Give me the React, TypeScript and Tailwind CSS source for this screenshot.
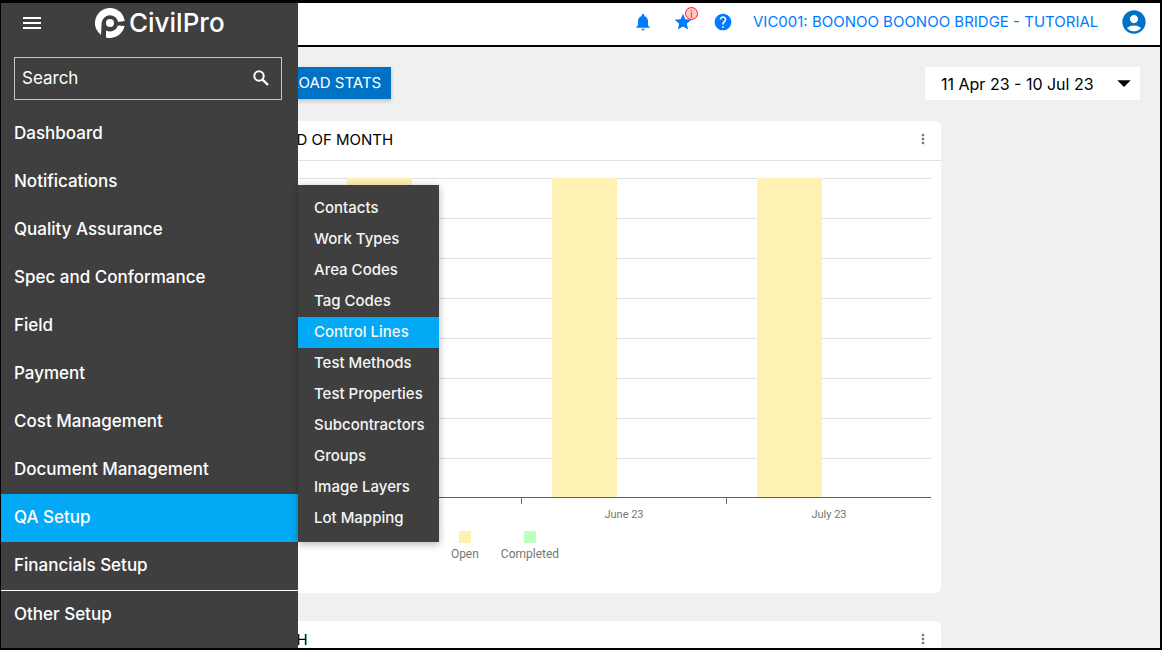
import { useState } from "react";
import { clsx } from "clsx";
import {
  MdAccountCircle,
  MdArrowDropDown,
  MdHelp,
  MdMenu,
  MdMoreVert,
  MdNotifications,
  MdStar,
} from "react-icons/md";

interface NavItem {
  label: string;
  divided?: boolean;
  children?: string[];
}

const NAV_ITEMS: NavItem[] = [
  { label: "Dashboard" },
  { label: "Notifications" },
  { label: "Quality Assurance" },
  { label: "Spec and Conformance" },
  { label: "Field" },
  { label: "Payment" },
  { label: "Cost Management" },
  { label: "Document Management" },
  {
    label: "QA Setup",
    children: [
      "Contacts",
      "Work Types",
      "Area Codes",
      "Tag Codes",
      "Control Lines",
      "Test Methods",
      "Test Properties",
      "Subcontractors",
      "Groups",
      "Image Layers",
      "Lot Mapping",
    ],
  },
  { label: "Financials Setup" },
  { label: "Other Setup", divided: true },
];

const MONTHS = [
  { label: "April 23", open: 0 },
  { label: "May 23", open: 8 },
  { label: "June 23", open: 8 },
  { label: "July 23", open: 8 },
];

const LEGEND = [
  { label: "Open", swatch: "bg-[#fff1b3]" },
  { label: "Completed", swatch: "bg-[#bfffbf]" },
];

function Logo() {
  return (
    <a href="#" aria-label="CivilPro" className="flex items-center gap-1 text-white">
      <svg viewBox="0 0 30 30" className="size-[30px]" fill="currentColor">
        <path d="M6 27 A15 15 0 1 1 29.8 13 L23.2 14 A8.4 8.4 0 0 0 6.6 15 Z" />
        <path d="M11 29.4 V22.4 A8.4 8.4 0 0 0 23 17.4 L29.6 18 A15 15 0 0 1 11 29.4 Z" />
        <circle cx="15" cy="15" r="4" />
      </svg>
      <span className="text-[26px] font-medium leading-7">CivilPro</span>
    </a>
  );
}

function SearchIcon() {
  return (
    <svg viewBox="0 0 20 20" className="size-5" fill="none" stroke="currentColor" strokeWidth="2">
      <circle cx="8" cy="7" r="4.7" />
      <path d="M11.3 10.3 L17 16" strokeWidth="2.4" />
    </svg>
  );
}

function Submenu({ items }: { items: string[] }) {
  const [active, setActive] = useState("Control Lines");

  return (
    <ul className="absolute bottom-0 left-full w-[141px] bg-[#3f3f3f] py-2 shadow-[0_2px_8px_rgba(0,0,0,0.3)]">
      {items.map((item) => (
        <li key={item}>
          <a
            href="#"
            onClick={() => setActive(item)}
            className={clsx(
              "flex h-[31px] items-center whitespace-nowrap pl-4 text-[15px] font-medium text-[#f5f5f5]",
              item === active && "bg-[#03a9f4]"
            )}
          >
            {item}
          </a>
        </li>
      ))}
    </ul>
  );
}

function Sidebar() {
  const [open, setOpen] = useState("QA Setup");

  return (
    <aside className="absolute inset-y-0 left-0 z-10 w-[297px] bg-[#3f3f3f] text-white">
      <div className="flex h-10 items-center pl-[19px]">
        <button aria-label="Menu" className="mr-[51px]">
          <MdMenu className="size-6" />
        </button>
        <Logo />
      </div>

      <div className="mb-[10px] ml-[13px] mr-4 mt-[14px] flex h-[43px] items-center border border-[#c8c8c8] pl-[7px] pr-[10px]">
        <input
          type="text"
          aria-label="Search"
          placeholder="Search"
          className="min-w-0 flex-1 bg-transparent text-[17px] outline-none placeholder:text-white"
        />
        <button aria-label="Run search">
          <SearchIcon />
        </button>
      </div>

      <nav>
        <ul>
          {NAV_ITEMS.map((item) => (
            <li key={item.label} className={clsx("relative", item.divided && "border-t border-white")}>
              <a
                href="#"
                onClick={() => setOpen(item.label)}
                className={clsx(
                  "flex h-12 items-center pl-[13px] text-[17px] font-medium",
                  open === item.label && "bg-[#03a9f4]"
                )}
              >
                {item.label}
              </a>
              {item.children && open === item.label && <Submenu items={item.children} />}
            </li>
          ))}
        </ul>
      </nav>
    </aside>
  );
}

function Header() {
  return (
    <header className="flex h-11 items-center justify-end gap-5 border-b-2 border-black bg-white pb-1 pr-3 text-[#007bff]">
      <button aria-label="Notifications">
        <MdNotifications className="size-5" />
      </button>
      <button aria-label="Favourites" className="relative">
        <MdStar className="size-5" />
        <span className="absolute -top-[5px] left-3 flex size-[13px] items-center justify-center rounded-full border border-[#f02020] bg-[#ffc9c9] text-[10px] leading-none text-[#f02020]">
          i
        </span>
      </button>
      <button aria-label="Help">
        <MdHelp className="size-5" />
      </button>
      <a href="#" className="w-[347px] whitespace-nowrap text-[15px]">
        VIC001: BOONOO BOONOO BRIDGE - TUTORIAL
      </a>
      <button aria-label="Account" className="text-[#0072c6]">
        <MdAccountCircle className="size-7" />
      </button>
    </header>
  );
}

function CardHeader({ title }: { title: string }) {
  return (
    <div className="flex h-10 items-center justify-between border-b border-[#e0e0e0] pl-[69px] pr-[10px]">
      <h2 className="text-[15px]">{title}</h2>
      <button aria-label="More options" className="pb-1 text-[#767676]">
        <MdMoreVert className="size-4" />
      </button>
    </div>
  );
}

function MonthChart() {
  const left = 42;
  const step = 205;

  return (
    <svg viewBox="0 0 872 350" className="block w-full font-['Roboto'] text-[11px]">
      {[0, 1, 2, 3, 4, 5, 6, 7].map((n) => (
        <rect key={n} x={left} y={n * 40} width="820" height="1" fill="#e0e0e0" />
      ))}
      {MONTHS.map((month, i) => (
        <g key={month.label}>
          <rect
            x={left + i * step + 31}
            y={320 - month.open * 40}
            width="65"
            height={month.open * 40}
            fill="#fff1b3"
          />
          <rect x={left + i * step} y="320" width="1" height="6" fill="#6e6e6e" />
          <text x={left + i * step + 103} y="340" textAnchor="middle" fill="#767676">
            {month.label}
          </text>
        </g>
      ))}
      <rect x={left} y="319" width="820" height="1" fill="#5f5f5f" />
    </svg>
  );
}

function Dashboard() {
  return (
    <main className="ml-[68px] pr-5 pt-5">
      <div className="flex h-[54px] items-start justify-between">
        <button className="ml-[163px] h-8 bg-[#0072c6] px-[10px] text-[15px] text-white shadow-[0_2px_4px_rgba(0,0,0,0.2)]">
          DOWNLOAD STATS
        </button>
        <div className="relative">
          <select
            aria-label="Date range"
            className="h-[33px] w-[215px] appearance-none bg-white pl-4 text-base text-black"
          >
            <option>11 Apr 23 - 10 Jul 23</option>
          </select>
          <MdArrowDropDown className="pointer-events-none absolute right-0 top-0 size-8" />
        </div>
      </div>

      <div className="flex max-w-[872px] flex-col gap-7">
        <section className="rounded-md bg-white pb-[31px]">
          <CardHeader title="LOTS OPEN UP TO END OF MONTH" />
          <div className="pt-[17px]">
            <MonthChart />
          </div>
          <ul className="mt-[3px] flex justify-center gap-[22px] font-['Roboto'] text-xs text-[#767676]">
            {LEGEND.map((entry) => (
              <li key={entry.label} className="flex flex-col items-center gap-[3px]">
                <span className={clsx("size-3", entry.swatch)} />
                {entry.label}
              </li>
            ))}
          </ul>
        </section>
        <section className="h-[472px] rounded-md bg-white">
          <CardHeader title="LOTS OPEN BY MONTH" />
        </section>
      </div>
    </main>
  );
}

export default function App() {
  return (
    <div className="relative h-screen overflow-hidden border-b-2 border-l border-r-2 border-t-[3px] border-black bg-[#f0f0f0] font-['Inter',sans-serif] text-black">
      <Header />
      <Dashboard />
      <Sidebar />
    </div>
  );
}
